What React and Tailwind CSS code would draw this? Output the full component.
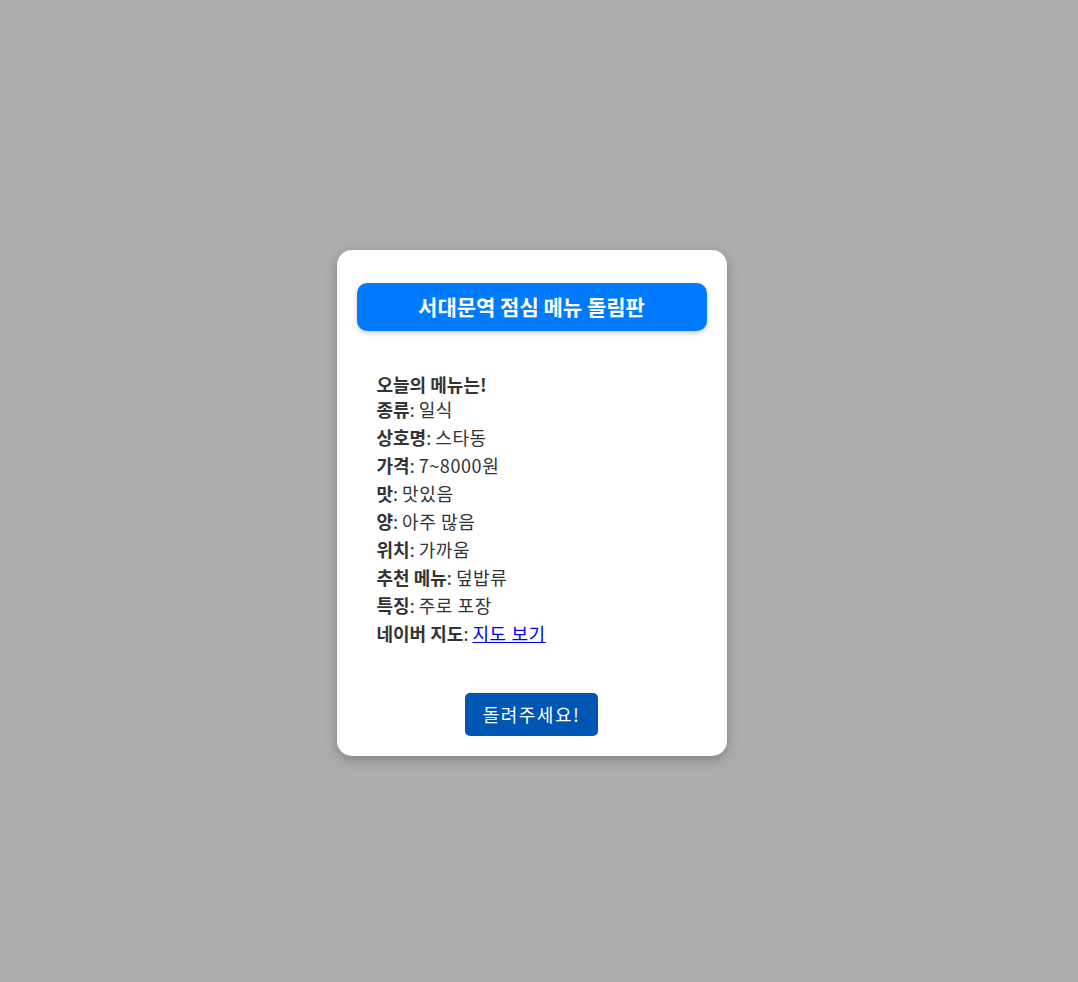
const items = [
  ["종류", "일식"],
  ["상호명", "스타동"],
  ["가격", "7~8000원"],
  ["맛", "맛있음"],
  ["양", "아주 많음"],
  ["위치", "가까움"],
  ["추천 메뉴", "덮밥류"],
  ["특징", "주로 포장"],
];

export default function App() {
  return (
    <div
      className="min-h-screen bg-[#adadad] flex items-center justify-center pt-6 pr-[15px]"
      style={{ fontFamily: '"Noto Sans CJK KR", "Noto Sans", sans-serif' }}
    >
      <div className="w-[390px] bg-white rounded-[15px] shadow-[0_4px_12px_rgba(0,0,0,0.25)] px-5 pt-[33px] pb-5">
        {/* Title bar */}
        <div className="h-12 rounded-[10px] bg-[#007bff] shadow-[0_2px_5px_rgba(0,0,0,0.2)] flex items-center justify-center text-white text-[21px] font-bold">
          서대문역 점심 메뉴 돌림판
        </div>

        {/* Result */}
        <div className="mt-[42px] px-5 text-[18px] text-[#333]">
          <div className="leading-[22px] font-bold">오늘의 메뉴는!</div>
          {items.map(([k, v]) => (
            <div key={k} className="leading-[28px]">
              <span className="font-bold">{k}</span>: <span className="tracking-[0.6px]">{v}</span>
            </div>
          ))}
          <div className="leading-[28px]">
            <span className="font-bold">네이버 지도</span>:{" "}
            <a href="#" className="text-[#0000ee] underline tracking-[0.6px]">
              지도 보기
            </a>
          </div>
        </div>

        <div className="mt-[46px] flex justify-center">
          <button className="h-[43px] w-[133px] rounded-[5px] bg-[#0056b3] text-white text-[18px] tracking-[1.5px]">
            돌려주세요!
          </button>
        </div>
      </div>
    </div>
  );
}
